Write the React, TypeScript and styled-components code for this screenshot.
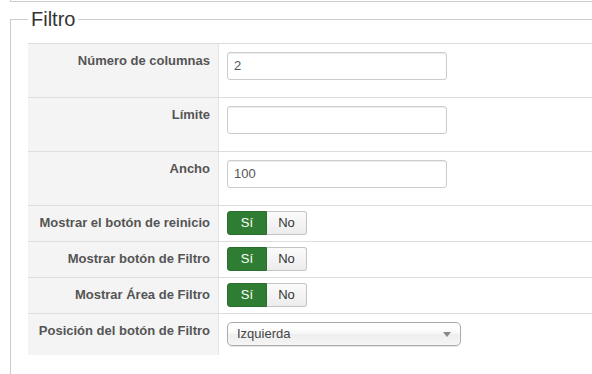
import styled, { createGlobalStyle } from "styled-components";

const GlobalStyle = createGlobalStyle`
  html, body {
    margin: 0;
    padding: 0;
    overflow: hidden;
    background: #fff;
    font-family: "Liberation Sans", Arial, sans-serif;
  }
`;

const Page = styled.div`
  padding-left: 10px;
  width: 582px;
`;

const TopPanel = styled.div`
  height: 1px;
  border-left: 1px solid #ccc;
  border-bottom: 1px solid #ccc;
`;

const Fieldset = styled.fieldset`
  margin: 6px 0 0 0;
  padding: 0 0 30px 17px;
  border: 1px solid #ccc;
  border-right: 0;
  min-width: 0;
`;

const Legend = styled.legend`
  padding: 0 3px;
  font-size: 20px;
  line-height: 23px;
  color: #333;
`;

const Table = styled.div`
  margin-top: 12px;
  border-top: 1px solid #ddd;
`;

const Row = styled.div`
  display: grid;
  grid-template-columns: 191px 1fr;
  & + & {
    border-top: 1px solid #ddd;
  }
`;

const Label = styled.div`
  background: #f4f4f4;
  border-right: 1px solid #e4e4e4;
  text-align: right;
  padding: 8px 8px 0 0;
  font-size: 13px;
  line-height: 18px;
  font-weight: bold;
  color: #555;
`;

const Cell = styled.div<{ $top: number; $bottom: number }>`
  padding: ${(p) => p.$top}px 8px ${(p) => p.$bottom}px 8px;
  display: flex;
  align-items: flex-start;
`;

const Input = styled.div`
  box-sizing: border-box;
  width: 220px;
  height: 28px;
  border: 1px solid #ccc;
  border-radius: 3px;
  box-shadow: inset 0 1px 1px rgba(0, 0, 0, 0.075);
  padding: 0 6px;
  font-size: 13px;
  line-height: 26px;
  color: #555;
`;

const BtnGroup = styled.div`
  display: inline-flex;
  height: 24px;
`;

const ToggleBtn = styled.div<{ $on?: boolean }>`
  box-sizing: border-box;
  width: 40px;
  height: 24px;
  font-size: 13px;
  line-height: 22px;
  text-align: center;
  border: 1px solid ${(p) => (p.$on ? "#2a6e2d" : "#c4c4c4")};
  border-left-width: ${(p) => (p.$on ? 1 : 0)}px;
  border-radius: ${(p) => (p.$on ? "3px 0 0 3px" : "0 3px 3px 0")};
  background: ${(p) =>
    p.$on ? "#2f7d32" : "linear-gradient(#fbfbfb, #ececec)"};
  color: ${(p) => (p.$on ? "#fff" : "#333")};
`;

const Select = styled.div`
  box-sizing: border-box;
  position: relative;
  width: 234px;
  height: 24px;
  border: 1px solid #aaa;
  border-radius: 5px;
  background: linear-gradient(#fff 20%, #f6f6f6 50%, #eee 52%, #f4f4f4 100%);
  box-shadow: 0 0 3px #fff inset, 0 1px 1px rgba(0, 0, 0, 0.1);
  padding-left: 9px;
  font-size: 13px;
  line-height: 22px;
  color: #444;
`;

const Arrow = styled.span`
  position: absolute;
  right: 9px;
  top: 9px;
  width: 0;
  height: 0;
  border-left: 4px solid transparent;
  border-right: 4px solid transparent;
  border-top: 5px solid #888;
`;

const Toggle = () => (
  <BtnGroup>
    <ToggleBtn $on>Sí</ToggleBtn>
    <ToggleBtn>No</ToggleBtn>
  </BtnGroup>
);

const App = () => {
  return (
    <Page>
      <GlobalStyle />
      <TopPanel />
      <Fieldset>
        <Legend>Filtro</Legend>
        <Table>
          <Row>
            <Label>Número de columnas</Label>
            <Cell $top={8} $bottom={17}>
              <Input>2</Input>
            </Cell>
          </Row>
          <Row>
            <Label>Límite</Label>
            <Cell $top={8} $bottom={17}>
              <Input />
            </Cell>
          </Row>
          <Row>
            <Label>Ancho</Label>
            <Cell $top={8} $bottom={17}>
              <Input>100</Input>
            </Cell>
          </Row>
          <Row>
            <Label>Mostrar el botón de reinicio</Label>
            <Cell $top={5} $bottom={6}>
              <Toggle />
            </Cell>
          </Row>
          <Row>
            <Label>Mostrar botón de Filtro</Label>
            <Cell $top={5} $bottom={6}>
              <Toggle />
            </Cell>
          </Row>
          <Row>
            <Label>Mostrar Área de Filtro</Label>
            <Cell $top={5} $bottom={6}>
              <Toggle />
            </Cell>
          </Row>
          <Row>
            <Label>Posición del botón de Filtro</Label>
            <Cell $top={8} $bottom={9}>
              <Select>
                Izquierda
                <Arrow />
              </Select>
            </Cell>
          </Row>
        </Table>
      </Fieldset>
    </Page>
  );
};

export default App;
